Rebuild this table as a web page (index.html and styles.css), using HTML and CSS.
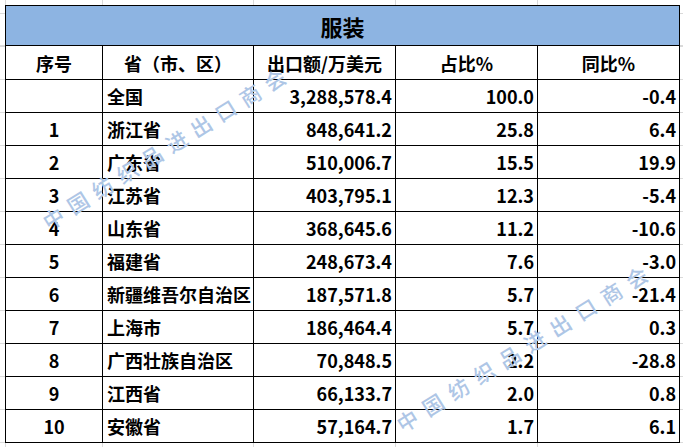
FILE: index.html
```html
<!DOCTYPE html>
<html lang="zh-CN">
<head>
<meta charset="utf-8">
<title>服装</title>
<link rel="stylesheet" href="styles.css">
</head>
<body>
<div class="page">
  <div class="sheet">
    <div class="cell title">服装</div>
    <div class="cell head">序号</div>
    <div class="cell head">省（市、区）</div>
    <div class="cell head">出口额/万美元</div>
    <div class="cell head">占比%</div>
    <div class="cell head">同比%</div>

    <div class="cell c"></div><div class="cell l">全国</div><div class="cell r">3,288,578.4</div><div class="cell r">100.0</div><div class="cell r">-0.4</div>
    <div class="cell c">1</div><div class="cell l">浙江省</div><div class="cell r">848,641.2</div><div class="cell r">25.8</div><div class="cell r">6.4</div>
    <div class="cell c">2</div><div class="cell l">广东省</div><div class="cell r">510,006.7</div><div class="cell r">15.5</div><div class="cell r">19.9</div>
    <div class="cell c">3</div><div class="cell l">江苏省</div><div class="cell r">403,795.1</div><div class="cell r">12.3</div><div class="cell r">-5.4</div>
    <div class="cell c">4</div><div class="cell l">山东省</div><div class="cell r">368,645.6</div><div class="cell r">11.2</div><div class="cell r">-10.6</div>
    <div class="cell c">5</div><div class="cell l">福建省</div><div class="cell r">248,673.4</div><div class="cell r">7.6</div><div class="cell r">-3.0</div>
    <div class="cell c">6</div><div class="cell l">新疆维吾尔自治区</div><div class="cell r">187,571.8</div><div class="cell r">5.7</div><div class="cell r">-21.4</div>
    <div class="cell c">7</div><div class="cell l">上海市</div><div class="cell r">186,464.4</div><div class="cell r">5.7</div><div class="cell r">0.3</div>
    <div class="cell c">8</div><div class="cell l">广西壮族自治区</div><div class="cell r">70,848.5</div><div class="cell r">2.2</div><div class="cell r">-28.8</div>
    <div class="cell c">9</div><div class="cell l">江西省</div><div class="cell r">66,133.7</div><div class="cell r">2.0</div><div class="cell r">0.8</div>
    <div class="cell c">10</div><div class="cell l">安徽省</div><div class="cell r">57,164.7</div><div class="cell r">1.7</div><div class="cell r">6.1</div>
  </div>
  <div class="wm wm1">中国纺织品进出口商会</div>
  <div class="wm wm2">中国纺织品进出口商会</div>
</div>
</body>
</html>
```

FILE: styles.css
```css
html, body {
  margin: 0;
  padding: 0;
}
body {
  width: 683px;
  height: 447px;
  overflow: hidden;
  background:
    linear-gradient(#dadada, #dadada) 5px 0 / 1px 100% no-repeat,
    linear-gradient(#dadada, #dadada) 102px 0 / 1px 100% no-repeat,
    linear-gradient(#dadada, #dadada) 253px 0 / 1px 100% no-repeat,
    linear-gradient(#dadada, #dadada) 395px 0 / 1px 100% no-repeat,
    linear-gradient(#dadada, #dadada) 537px 0 / 1px 100% no-repeat,
    linear-gradient(#dadada, #dadada) 0 45px / 100% 1px no-repeat,
    linear-gradient(to bottom, #dadada 1px, transparent 1px) 0 13px / 100% 33px repeat-y,
    #ffffff;
  font-family: "Noto Sans CJK SC", "Microsoft YaHei", sans-serif;
  color: #000;
}
.page {
  position: relative;
  padding: 5px 0 0 5px;
  height: 442px;
}
.sheet {
  display: grid;
  grid-template-columns: 96px 150px 141px 141px 141px;
  grid-template-rows: 39px 33px repeat(11, 32px);
  gap: 1px;
  padding: 1px;
  background: #000;
  width: max-content;
}
.cell {
  background: #fff;
  display: flex;
  align-items: center;
  font-size: 18px;
  font-weight: 700;
  line-height: 1;
  white-space: nowrap;
  overflow: hidden;
}
.title {
  grid-column: 1 / -1;
  background: #8db4e2;
  justify-content: center;
  font-size: 22px;
}
.head {
  justify-content: center;
}
.c {
  justify-content: center;
}
.l {
  justify-content: flex-start;
  padding-left: 4px;
}
.r {
  justify-content: flex-end;
  padding-right: 3px;
}
.wm {
  position: absolute;
  white-space: nowrap;
  font-size: 21px;
  font-weight: 500;
  line-height: 1;
  letter-spacing: 9px;
  padding-left: 9px;
  color: #aec6e6;
  pointer-events: none;
}
.wm1 {
  left: 164px;
  top: 149px;
  letter-spacing: 8px;
  padding-left: 8px;
  transform: translate(-50%, -50%) rotate(-32deg);
}
.wm2 {
  left: 522px;
  top: 349px;
  transform: translate(-50%, -50%) rotate(-32deg);
}
```
